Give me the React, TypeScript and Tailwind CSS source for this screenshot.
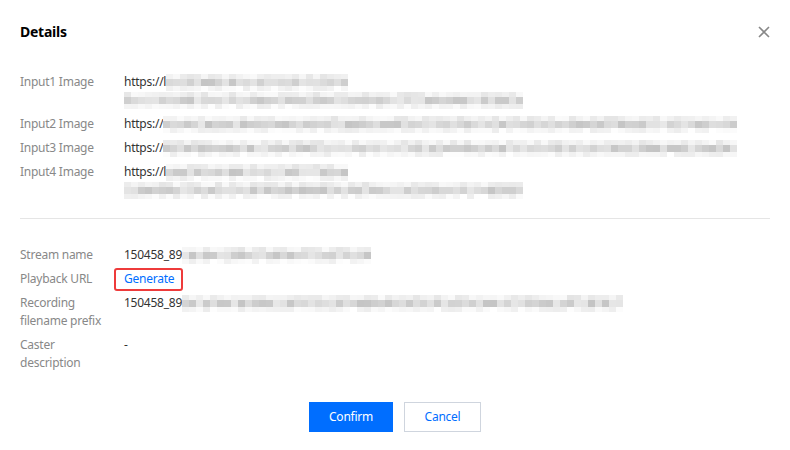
import React from 'react';

// pseudo-random greys for the blurred parts of the screenshot
const rand = (seed: number) => {
  let s = seed;
  return () => {
    s = (s * 9301 + 49297) % 233280;
    return s / 233280;
  };
};

const Mosaic = ({ width, seed }: { width: number; seed: number }) => {
  const r = rand(seed);
  const cols = Math.floor(width / 7);
  const rows = [
    { h: 5, min: 228, max: 250 },
    { h: 7, min: 196, max: 232 },
    { h: 5, min: 236, max: 255 },
  ];
  return (
    <span className="inline-flex flex-col align-middle" style={{ width: cols * 7 }}>
      {rows.map((row, i) => (
        <span key={i} className="flex">
          {Array.from({ length: cols }).map((_, j) => {
            const v = Math.round(row.min + r() * (row.max - row.min));
            return <span key={j} style={{ width: 7, height: row.h, background: `rgb(${v},${v},${v})` }} />;
          })}
        </span>
      ))}
    </span>
  );
};

const Row = ({ label, children }: { label: React.ReactNode; children: React.ReactNode }) => (
  <div className="flex">
    <div className="w-[104px] shrink-0 text-[#888]">{label}</div>
    <div className="flex-1 text-[#333]">{children}</div>
  </div>
);

const Line = ({ children }: { children: React.ReactNode }) => (
  <div className="flex h-[18px] items-center">{children}</div>
);

export default function App() {
  return (
    <div
      className="w-[790px] h-[450px] bg-white px-5 text-[12px] leading-[18px] relative"
      style={{ fontFamily: '"Noto Sans", "Open Sans", sans-serif', letterSpacing: '-0.25px' }}
    >
      <div className="flex items-center justify-between h-[62px] pt-[1px]">
        <h2 className="text-[14px] font-bold text-black">Details</h2>
        <button className="w-4 h-4 flex items-center justify-center mr-[-2px] text-[#888]">
          <svg width="12" height="12" viewBox="0 0 12 12" fill="none" stroke="currentColor" strokeWidth="1.6">
            <path d="M1 1L11 11M11 1L1 11" />
          </svg>
        </button>
      </div>

      <div className="flex flex-col gap-[6px] pt-[11px] pb-[19px] border-b border-[#e5e5e5]">
        <Row label="Input1 Image">
          <Line>https://l<Mosaic width={185} seed={11} /></Line>
          <Line><Mosaic width={400} seed={23} /></Line>
        </Row>
        <Row label="Input2 Image">
          <Line>https://<Mosaic width={577} seed={37} /></Line>
        </Row>
        <Row label="Input3 Image">
          <Line>https://<Mosaic width={577} seed={51} /></Line>
        </Row>
        <Row label="Input4 Image">
          <Line>https://l<Mosaic width={185} seed={67} /></Line>
          <Line><Mosaic width={400} seed={79} /></Line>
        </Row>
      </div>

      <div className="flex flex-col gap-[6px] pt-[27px]">
        <Row label="Stream name">
          <Line>150458_89<Mosaic width={189} seed={91} /></Line>
        </Row>
        <Row label="Playback URL">
          <Line>
            <span className="relative text-[#006eff]">
              Generate
              <span className="absolute left-[-10px] right-[-9px] top-[-2px] bottom-[-3px] border-2 border-[#ee3b3b] rounded-[3px]" />
            </span>
          </Line>
        </Row>
        <Row label={<>Recording<br />filename prefix</>}>
          <Line>150458_89<Mosaic width={444} seed={103} /></Line>
        </Row>
        <Row label={<>Caster<br />description</>}>
          <Line>-</Line>
        </Row>
      </div>

      <div className="flex justify-center gap-[11px] pt-[30px]">
        <button className="w-[84px] h-[30px] bg-[#006eff] text-white">Confirm</button>
        <button className="w-[77px] h-[30px] border border-[#cfd5de] text-[#006eff] bg-white">Cancel</button>
      </div>
    </div>
  );
}
